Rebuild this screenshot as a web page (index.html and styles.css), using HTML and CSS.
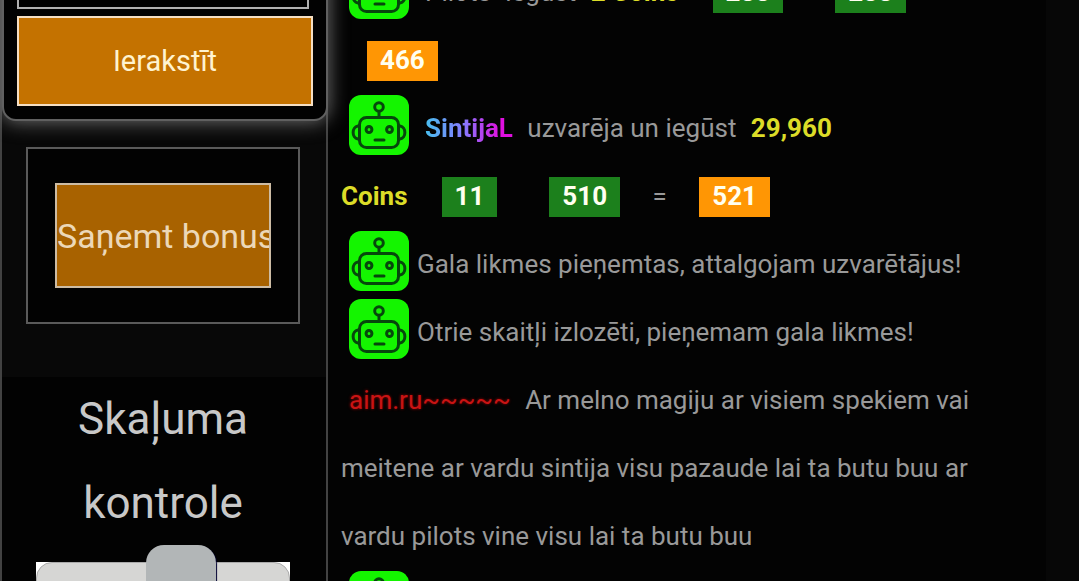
FILE: index.html
```html
<!DOCTYPE html>
<html lang="lv">
<head>
    <meta charset="UTF-8">
    <meta name="viewport" content="width=device-width, initial-scale=1.0">
    <title>Čats</title>
    <link rel="stylesheet" href="styles.css">
</head>
<body>
    <svg class="sprite" aria-hidden="true">
        <symbol id="robot" viewBox="0 0 60 60">
            <g fill="none" stroke="#06480c" stroke-width="3" stroke-linecap="round">
                <circle cx="30" cy="12" r="4.3"/>
                <path d="M30 17v5"/>
                <rect x="10.5" y="22.5" width="39" height="30" rx="7"/>
                <path d="M9 31c-6.5 1-6.5 12 0 13M51 31c6.5 1 6.5 12 0 13"/>
                <ellipse cx="20" cy="34.5" rx="2.9" ry="3.1"/>
                <ellipse cx="40.5" cy="34.5" rx="2.9" ry="3.1"/>
                <path d="M26 45h9"/>
            </g>
        </symbol>
    </svg>

    <aside class="sidebar">
        <form class="panel">
            <input class="field" type="text" aria-label="Likme">
            <button class="btn" type="button">Ierakstīt</button>
        </form>
        <div class="bonus">
            <button class="btn bonus-btn" type="button">Saņemt bonus</button>
        </div>
        <div class="volume">
            <label for="volume">Skaļuma kontrole</label>
            <input class="slider" type="range" id="volume" min="0" max="100" value="60">
        </div>
    </aside>

    <main class="chat">
        <div class="log">
            <p><svg class="avatar"><use href="#robot"/></svg><span class="user">Pilots</span> iegūst <span class="win"><b class="amount">2 Coins</b><span class="num">233</span><span class="num">233</span></span> = <span class="num total">466</span></p>
            <p><svg class="avatar"><use href="#robot"/></svg><span class="user"><b class="rainbow">SintijaL</b></span> uzvarēja un iegūst <b class="amount">29,960</b> <span class="win"><b class="coins">Coins</b><span class="num">11</span><span class="num">510</span></span> = <span class="num total">521</span></p>
            <p><svg class="avatar"><use href="#robot"/></svg>Gala likmes pieņemtas, attalgojam uzvarētājus!</p>
            <p><svg class="avatar"><use href="#robot"/></svg>Otrie skaitļi izlozēti, pieņemam gala likmes!</p>
            <p><span class="user red">aim.ru~~~~~</span> Ar melno magiju ar visiem spekiem vai meitene ar vardu sintija visu pazaude lai ta butu buu ar vardu pilots vine visu lai ta butu buu</p>
            <p><svg class="avatar"><use href="#robot"/></svg></p>
        </div>
    </main>
</body>
</html>
```
FILE: styles.css
```css
* {
    box-sizing: border-box;
}
body {
    margin: 0;
    height: 100vh;
    overflow: hidden;
    display: flex;
    background-color: #030303;
    color: #999;
    font-family: Roboto, sans-serif;
    font-size: 26px;
}
.sprite {
    display: none;
}

/* left column */
.sidebar {
    flex: 0 0 328px;
    min-width: 0;
    border: 2px solid #424242;
    border-top: 0;
    border-bottom: 0;
    background-color: #080808;
    position: relative;
    z-index: 1;
}
.panel {
    display: flex;
    flex-direction: column;
    gap: 7px;
    margin: -48px -2px 0 0;
    padding: 13px;
    background-color: #020202;
    border: 2px solid #606060;
    border-radius: 14px;
    box-shadow: 0 0 20px #777;
}
.field {
    height: 42px;
    min-width: 0;
    margin-right: 4px;
    background-color: #000;
    color: #ccc;
    border: 2px solid #b0b0b0;
}
.btn {
    height: 90px;
    padding: 0;
    background-color: #c47200;
    color: #fff3d0;
    border: 2px solid #f5dfc4;
    font-family: inherit;
    font-size: 29px;
}
.bonus {
    margin: 26px 26px 53px 24px;
    padding: 34px 27px;
    background-color: #020202;
    border: 2px solid #5a5a5a;
}
.bonus-btn {
    display: block;
    width: 100%;
    height: 105px;
    overflow: hidden;
    white-space: nowrap;
    text-align: left;
    background-color: #a86200;
    color: #ecd8b8;
    border-color: #cdbca4;
    font-size: 34px;
}
.volume {
    display: flex;
    flex-direction: column;
    padding: 0 36px 0 34px;
    background-color: #020202;
    color: #c8c8c8;
    font-size: 44px;
    line-height: 84px;
    text-align: center;
}
.slider {
    appearance: none;
    width: 100%;
    height: 36px;
    margin: 17px 0 0;
    background-color: #fff;
}
.slider::-webkit-slider-runnable-track {
    height: 36px;
    background-color: #d6d6d4;
    border: 1px solid #aaa;
    border-radius: 16px;
}
.slider::-webkit-slider-thumb {
    appearance: none;
    width: 70px;
    height: 70px;
    margin-top: -18px;
    background-color: #b2b6b7;
    border-radius: 18px;
    box-shadow: 1px 1px 1px #000031;
}

/* chat messages */
.chat {
    flex: 1;
    min-width: 0;
    padding: 0 13px;
    background-color: #030303;
    border-right: 33px solid #070707;
}
.log {
    margin-top: -42px;
}
.log p {
    margin: 0;
    line-height: 68px;
}
.avatar {
    width: 60px;
    height: 60px;
    margin: 0 8px;
    vertical-align: -18px;
    background-color: #14f500;
    border-radius: 12px;
}
.user {
    padding: 0 8px;
}
.rainbow {
    background-image: linear-gradient(90deg, #48c0f0, #8878ff 45%, #e010e0 85%);
    background-clip: text;
    -webkit-background-clip: text;
    color: transparent;
}
.red {
    color: #c81414;
    text-shadow: 0 0 3px #900;
}
.win {
    white-space: nowrap;
}
.amount, .coins {
    color: #dcdc28;
    padding-right: 8px;
}
.amount {
    padding-left: 8px;
}
.num {
    margin: 0 26px;
    padding: 4px 13px 6px;
    background-color: #1c801c;
    color: #fffff0;
    font-weight: bold;
}
.total {
    background-color: #ff9604;
}
```
